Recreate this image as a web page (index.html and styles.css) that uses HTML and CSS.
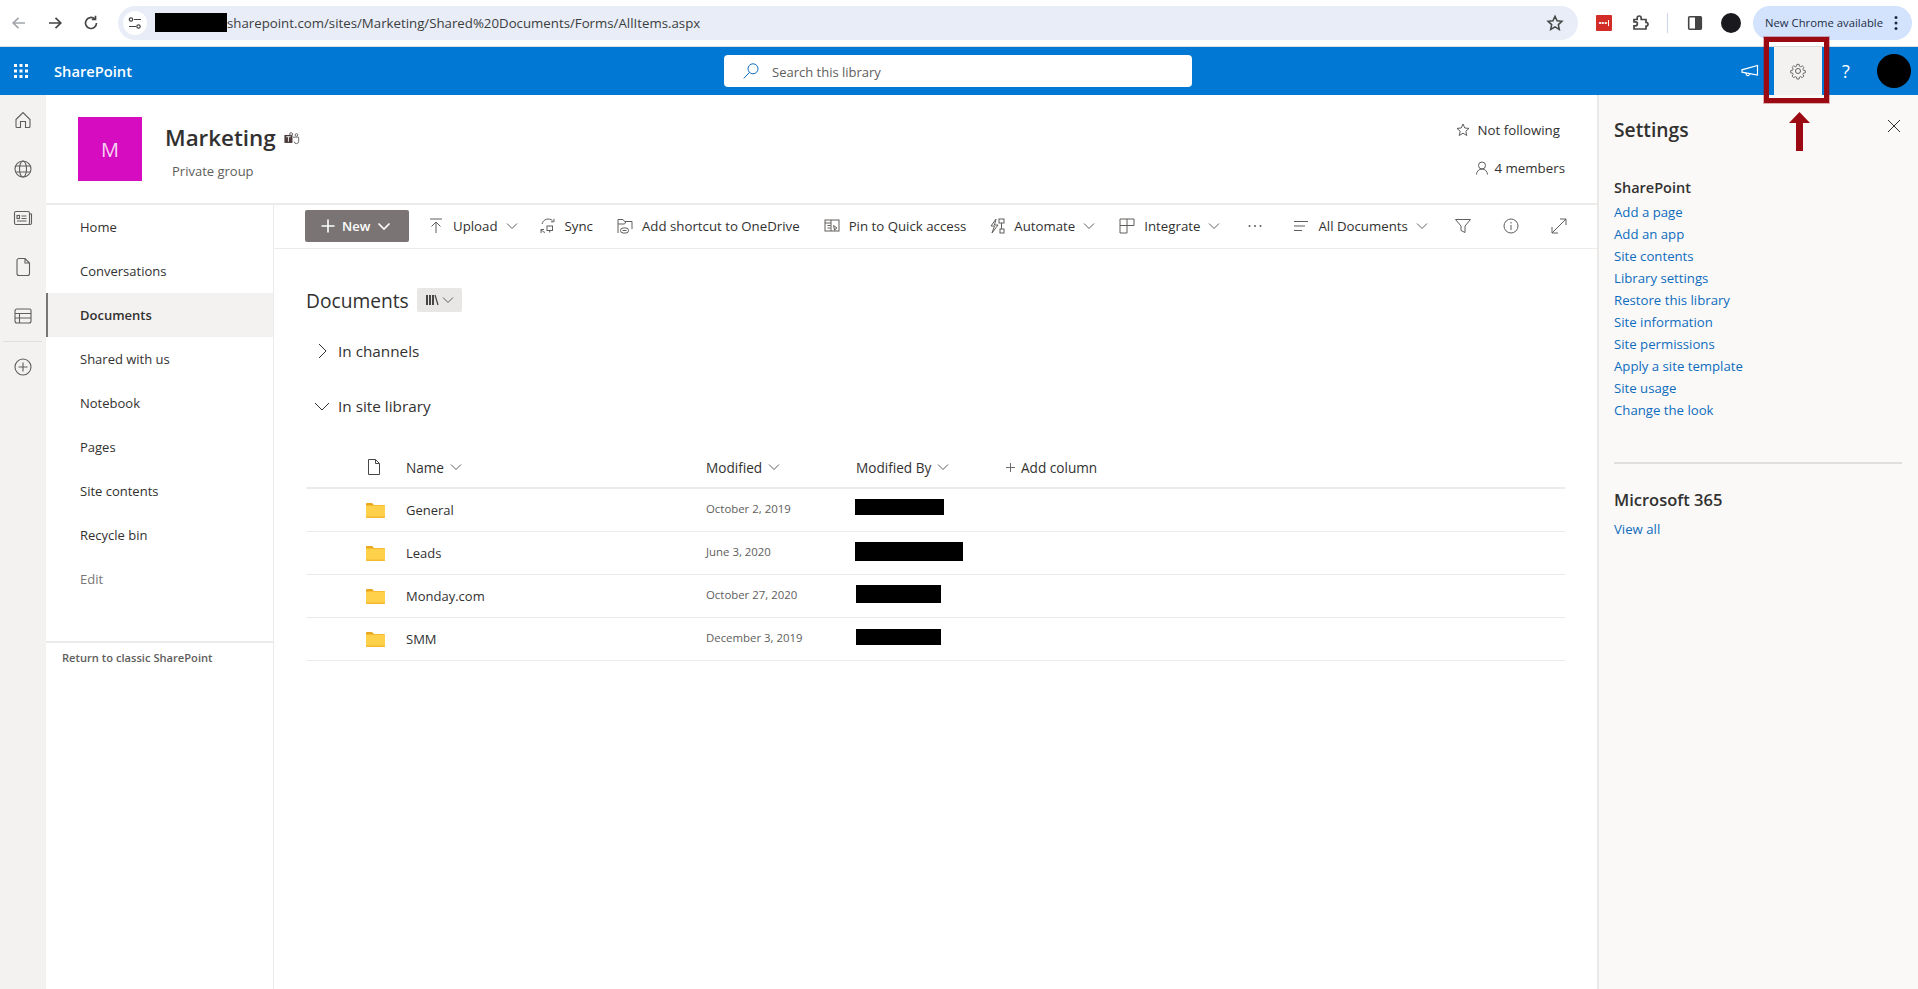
FILE: index.html
```html
<!DOCTYPE html>
<html lang="en">
<head>
<meta charset="utf-8">
<title>Documents - SharePoint</title>
<link rel="stylesheet" href="styles.css">
</head>
<body>
<header class="chrome">
  <div class="chrome-nav">
    <span class="c-cell"><svg class="i20 st-off" viewBox="0 0 20 20"><path d="M16 10H4.5M9.5 4.8 4.2 10l5.3 5.2"/></svg></span>
    <span class="c-cell"><svg class="i20 st-dark" viewBox="0 0 20 20"><path d="M4 10h11.5M10.5 4.8l5.3 5.2-5.3 5.2"/></svg></span>
    <span class="c-cell"><svg class="i20 st-dark" viewBox="0 0 20 20"><path d="M15.5 10a5.5 5.5 0 1 1-1.7-4M14.500 2.800v3.700h-3.700"/></svg></span>
  </div>
  <div class="omnibox">
    <span class="site-chip"><svg class="i14 st-thin-dark" viewBox="0 0 14 14"><path d="M6 3.500h7M1 10.500h7"/><circle cx="3" cy="3.500" r="1.700"/><circle cx="10.500" cy="10.500" r="1.700"/></svg></span>
    <span class="redact redact-url"></span>
    <span class="url">sharepoint.com/sites/Marketing/Shared%20Documents/Forms/AllItems.aspx</span>
    <svg class="i18 star-btn st-dark" viewBox="0 0 20 20"><path d="m10 2.500 2.300 5 5.400.6-4 3.700 1.100 5.400L10 14.400l-4.800 2.800 1.100-5.400-4-3.700 5.400-.6z"/></svg>
  </div>
  <div class="chrome-tools">
    <span class="c-cell"><span class="lastpass"><span class="lp-dots">•••</span><span class="lp-bar"></span></span></span>
    <span class="c-cell"><svg class="i20 st-dark" viewBox="0 0 20 20"><path d="M4 6.500h3.200V5a2 2 0 0 1 4 0v1.500H16v3h1a2 2 0 0 1 0 3.500h-1v3H4v-3.200h1.400a2 2 0 0 0 0-4H4z"/></svg></span>
    <span class="c-sep"></span>
    <span class="c-cell"><svg class="i20" viewBox="0 0 20 20"><rect x="3.700" y="3.700" width="12.600" height="12.600" rx="1" fill="none" stroke="#444" stroke-width="1.600"/><rect x="10" y="3.700" width="6.300" height="12.600" fill="#444"/></svg></span>
    <span class="c-cell"><span class="chrome-avatar"></span></span>
    <span class="update-pill"><span class="update-text">New Chrome available</span><svg class="pill-dots" viewBox="0 0 4 16"><circle cx="2" cy="2.500" r="1.500"/><circle cx="2" cy="8" r="1.500"/><circle cx="2" cy="13.500" r="1.500"/></svg></span>
  </div>
</header>

<div class="suite">
  <div class="suite-left">
    <svg class="waffle" viewBox="0 0 16 16"><g fill="#fff"><rect x="1" y="1" width="3" height="3"/><rect x="6.500" y="1" width="3" height="3"/><rect x="12" y="1" width="3" height="3"/><rect x="1" y="6.500" width="3" height="3"/><rect x="6.500" y="6.500" width="3" height="3"/><rect x="12" y="6.500" width="3" height="3"/><rect x="1" y="12" width="3" height="3"/><rect x="6.500" y="12" width="3" height="3"/><rect x="12" y="12" width="3" height="3"/></g></svg>
    <span class="suite-title">SharePoint</span>
  </div>
  <div class="search">
    <svg class="i18 st-blue" viewBox="0 0 18 18"><circle cx="11" cy="6.800" r="5"/><path d="m7.400 10.400-5.600 6"/></svg>
    <span class="search-text">Search this library</span>
  </div>
  <div class="suite-right">
    <span class="s-cell"><svg class="i20 st-white" viewBox="0 0 20 20"><path d="M17.500 4.500v9.500L2 11.200V8.800zM6 12l.3 1.600a1.600 1.600 0 0 0 3.100-.7l-.2-.6"/></svg></span>
    <span class="s-cell s-active"><svg class="i18 st-gear" viewBox="0 0 20 20"><circle cx="10" cy="10" r="2.800"/><path d="M8.600 1.800h2.800l.4 2.300 1.500.7 2-1.200 2 2-1.300 2 .7 1.500 2.300.4v2.800l-2.300.4-.7 1.500 1.300 2-2 2-2-1.300-1.500.7-.4 2.300H8.600l-.4-2.300-1.500-.7-2 1.300-2-2 1.300-2-.7-1.500-2.300-.4V9.500l2.300-.4.7-1.500-1.300-2 2-2 2 1.200 1.500-.7z" transform="translate(1 1) scale(.9)"/></svg></span>
    <span class="s-cell s-help">?</span>
    <span class="s-cell"><span class="suite-avatar"></span></span>
  </div>
</div>

<main class="workspace">
  <nav class="rail">
    <svg class="i20 st-rail" viewBox="0 0 20 20"><path d="M3 9.500 10 2.500l7 7v7a1 1 0 0 1-1 1h-3.500v-6h-5v6H4a1 1 0 0 1-1-1z"/></svg>
    <svg class="i20 st-rail" viewBox="0 0 20 20"><circle cx="10" cy="10" r="8"/><ellipse cx="10" cy="10" rx="3.500" ry="8"/><path d="M2.600 7h14.800M2.600 13h14.800"/></svg>
    <svg class="i20 st-rail" viewBox="0 0 20 20"><rect x="1.500" y="3.500" width="15" height="13" rx="1.500"/><path d="M16.500 6h2v9a1.500 1.500 0 0 1-1.500 1.500h-1M8.500 8h5M8.500 10.500h5M4 13h9.500"/><rect x="4" y="7.500" width="2.500" height="3"/></svg>
    <svg class="i20 st-rail" viewBox="0 0 20 20"><path d="M4 3.500a2 2 0 0 1 2-2h6l4.500 4.500v10.500a2 2 0 0 1-2 2H6a2 2 0 0 1-2-2zM12 1.500V6h4.500"/></svg>
    <svg class="i20 st-rail" viewBox="0 0 20 20"><path d="M4 3h12.500a1.500 1.500 0 0 1 1.500 1.500V15a2 2 0 0 1-2 2H4a2 2 0 0 1-2-2V5a2 2 0 0 1 2-2zM2 7.500h16M2 12h16M6.500 7.500V17"/></svg>
    <span class="rail-rule"></span>
    <svg class="i20 st-rail" viewBox="0 0 20 20"><circle cx="10" cy="10" r="8"/><path d="M10 5.500v9M5.500 10h9"/></svg>
  </nav>

  <div class="center">
    <section class="site-head">
      <div class="site-tile">M</div>
      <div class="site-meta">
        <div class="site-name-row">
          <h1 class="site-name">Marketing</h1>
          <svg class="teams" viewBox="0 0 18 14"><rect x="0.500" y="3" width="9" height="9" fill="#4b3a3a"/><path d="M2.500 5h5M5 5v5.500" stroke="#fff" fill="none"/><circle cx="8" cy="2" r="1.600" fill="none" stroke="#605e5c"/><circle cx="14" cy="3" r="1.500" fill="none" stroke="#605e5c"/><path d="M10 5.500h6.500v4.500a2.500 2.500 0 0 1-5 .5" fill="none" stroke="#605e5c"/></svg>
        </div>
        <div class="site-privacy">Private group</div>
      </div>
      <div class="site-actions">
        <div class="follow"><svg class="i14 st-mid" viewBox="0 0 14 14"><path d="m7 1 1.800 4 4.200.4-3.200 2.800 1 4.300L7 10.200 3.200 12.500l1-4.300L1 5.400 5.200 5z"/></svg><span>Not following</span></div>
        <div class="members"><svg class="i14 st-mid" viewBox="0 0 14 14"><circle cx="7" cy="4.500" r="3.500"/><path d="M1.500 13.500a5.500 5.500 0 0 1 11 0"/></svg><span>4 members</span></div>
      </div>
    </section>

    <div class="columns">
      <aside class="sidenav">
        <div class="navlist">
          <a class="nav-item">Home</a>
          <a class="nav-item">Conversations</a>
          <a class="nav-item nav-on">Documents</a>
          <a class="nav-item">Shared with us</a>
          <a class="nav-item">Notebook</a>
          <a class="nav-item">Pages</a>
          <a class="nav-item">Site contents</a>
          <a class="nav-item">Recycle bin</a>
          <a class="nav-item nav-edit">Edit</a>
        </div>
        <div class="classic">Return to classic SharePoint</div>
      </aside>

      <section class="library">
        <div class="toolbar">
          <button class="new-btn"><svg class="i14 st-white-b" viewBox="0 0 14 14"><path d="M7 .5v13M.5 7h13"/></svg><span>New</span><svg class="i14 st-white-b" viewBox="0 0 14 14"><path d="m1.500 4.500 5.500 5.500 5.500-5.500"/></svg></button>
          <span class="tool"><svg class="i16 st-tool" viewBox="0 0 16 16"><path d="M2 1h12M8 15V4M3.500 8.500 8 4l4.500 4.500"/></svg><span>Upload</span><svg class="chev st-tool" viewBox="0 0 12 12"><path d="m1 3.500 5 5 5-5"/></svg></span>
          <span class="tool tool-sync"><svg class="i16 st-tool" viewBox="0 0 16 16"><path d="M2 6a6.500 6.500 0 0 1 10.500-3.500M14 .8v3h-3M1 11.500a6.500 6.500 0 0 0 4 3M1 15v-3.500h3"/><rect x="7" y="8" width="5.500" height="4.500"/><path d="M9.700 12.500v2"/></svg><span>Sync</span></span>
          <span class="tool"><svg class="i16 st-tool" viewBox="0 0 16 16"><path d="M1 15V1.500h5l1.500 2H15V11M1 6h6.500l1.500-2.500"/><rect x="3.500" y="10" width="8" height="5" rx="2.500"/><path d="M5.500 12.500h4"/></svg><span>Add shortcut to OneDrive</span></span>
          <span class="tool"><svg class="i16 st-tool" viewBox="0 0 16 16"><rect x="1" y="2" width="14" height="11"/><path d="M1 5h6M3.500 7.500h3M3.500 10h3M7 2v11"/><path d="m9.500 7.500 3.500 2.500-1.500.8-.8 1.700z"/></svg><span>Pin to Quick access</span></span>
          <span class="tool tool-auto"><svg class="i16 st-tool" viewBox="0 0 16 16"><path d="M7 1 2 8h3.500L3 15l6-8H5.500z"/><rect x="10" y="1" width="5" height="4"/><rect x="11" y="11" width="4" height="4"/><path d="M12.500 5v6"/></svg><span>Automate</span><svg class="chev st-tool" viewBox="0 0 12 12"><path d="m1 3.500 5 5 5-5"/></svg></span>
          <span class="tool"><svg class="i16 st-tool" viewBox="0 0 16 16"><path d="M1 1h14v6.500H8V15H1zM1 7.500h7M8 1v6.500"/></svg><span>Integrate</span><svg class="chev st-tool" viewBox="0 0 12 12"><path d="m1 3.500 5 5 5-5"/></svg></span>
          <span class="tool tool-more"><svg class="i16" viewBox="0 0 16 16"><g fill="#605e5c"><circle cx="2.500" cy="8" r="1"/><circle cx="8" cy="8" r="1"/><circle cx="13.500" cy="8" r="1"/></g></svg></span>
          <span class="tool tool-view"><svg class="i16 st-tool" viewBox="0 0 16 16"><path d="M1 3.500h14M1 8h11M1 12.500h8"/></svg><span>All Documents</span><svg class="chev st-tool" viewBox="0 0 12 12"><path d="m1 3.500 5 5 5-5"/></svg></span>
          <span class="tool tool-filter"><svg class="i16 st-tool" viewBox="0 0 16 16"><path d="M.5 1.500h15L10 8v6.500l-4-2V8z"/></svg></span>
          <span class="tool tool-end"><svg class="i16 st-tool" viewBox="0 0 16 16"><circle cx="8" cy="8" r="7"/><path d="M8 7v5M8 4v1.500"/></svg></span>
          <span class="tool tool-end"><svg class="i16 st-tool" viewBox="0 0 16 16"><path d="M1 15 15 1M9 1h6v6M1 9v6h6"/></svg></span>
        </div>

        <div class="lib-body">
          <div class="doc-title-row">
            <h2 class="doc-title">Documents</h2>
            <span class="lib-switch"><svg class="i14 st-books" viewBox="0 0 14 14"><path d="M2 2v10M5 2v10M8 2v10"/><path class="book-slant" d="m10 2 3 10"/></svg><svg class="chev st-tool" viewBox="0 0 12 12"><path d="m1 3.500 5 5 5-5"/></svg></span>
          </div>
          <div class="group group-channels"><svg class="i14 st-text" viewBox="0 0 14 14"><path d="m4 0 7 7-7 7"/></svg><span>In channels</span></div>
          <div class="group group-library"><svg class="i14 st-text" viewBox="0 0 14 14"><path d="m0 4 7 7 7-7"/></svg><span>In site library</span></div>

          <div class="table">
            <div class="t-row t-head">
              <span class="t-icon"><svg class="i16 st-tool-dark" viewBox="0 0 16 16"><path d="M2.500.5h7l4 4v11h-11zM9.500.5v4h4"/></svg></span>
              <span class="th">Name<svg class="chev st-tool" viewBox="0 0 12 12"><path d="m1 3.500 5 5 5-5"/></svg></span>
              <span class="th">Modified<svg class="chev st-tool" viewBox="0 0 12 12"><path d="m1 3.500 5 5 5-5"/></svg></span>
              <span class="th">Modified By<svg class="chev st-tool" viewBox="0 0 12 12"><path d="m1 3.500 5 5 5-5"/></svg></span>
              <span class="th th-add"><svg class="plus st-tool" viewBox="0 0 10 10"><path d="M5 0v10M0 5h10"/></svg>Add column</span>
            </div>
            <div class="t-row">
              <span class="t-icon"><svg class="folder" viewBox="0 0 19 15"><path d="M0 1A1 1 0 0 1 1 0h5l2 2h10a1 1 0 0 1 1 1v3H0z" fill="#e8a71c"/><path d="M0 2.500h19V14a1 1 0 0 1-1 1H1a1 1 0 0 1-1-1z" fill="#ffd04a"/><path d="M0 14v-.5h19v.5a1 1 0 0 1-1 1H1a1 1 0 0 1-1-1z" fill="#f4b92e"/></svg></span>
              <span class="file-name">General</span>
              <span class="file-date">October 2, 2019</span>
              <span class="redact by-1"></span>
            </div>
            <div class="t-row">
              <span class="t-icon"><svg class="folder" viewBox="0 0 19 15"><path d="M0 1A1 1 0 0 1 1 0h5l2 2h10a1 1 0 0 1 1 1v3H0z" fill="#e8a71c"/><path d="M0 2.500h19V14a1 1 0 0 1-1 1H1a1 1 0 0 1-1-1z" fill="#ffd04a"/><path d="M0 14v-.5h19v.5a1 1 0 0 1-1 1H1a1 1 0 0 1-1-1z" fill="#f4b92e"/></svg></span>
              <span class="file-name">Leads</span>
              <span class="file-date">June 3, 2020</span>
              <span class="redact by-2"></span>
            </div>
            <div class="t-row">
              <span class="t-icon"><svg class="folder" viewBox="0 0 19 15"><path d="M0 1A1 1 0 0 1 1 0h5l2 2h10a1 1 0 0 1 1 1v3H0z" fill="#e8a71c"/><path d="M0 2.500h19V14a1 1 0 0 1-1 1H1a1 1 0 0 1-1-1z" fill="#ffd04a"/><path d="M0 14v-.5h19v.5a1 1 0 0 1-1 1H1a1 1 0 0 1-1-1z" fill="#f4b92e"/></svg></span>
              <span class="file-name">Monday.com</span>
              <span class="file-date">October 27, 2020</span>
              <span class="redact by-3"></span>
            </div>
            <div class="t-row">
              <span class="t-icon"><svg class="folder" viewBox="0 0 19 15"><path d="M0 1A1 1 0 0 1 1 0h5l2 2h10a1 1 0 0 1 1 1v3H0z" fill="#e8a71c"/><path d="M0 2.500h19V14a1 1 0 0 1-1 1H1a1 1 0 0 1-1-1z" fill="#ffd04a"/><path d="M0 14v-.5h19v.5a1 1 0 0 1-1 1H1a1 1 0 0 1-1-1z" fill="#f4b92e"/></svg></span>
              <span class="file-name">SMM</span>
              <span class="file-date">December 3, 2019</span>
              <span class="redact by-4"></span>
            </div>
          </div>
        </div>
      </section>
    </div>
  </div>

  <aside class="settings">
    <div class="settings-head">
      <h2 class="settings-title">Settings</h2>
      <svg class="close st-text" viewBox="0 0 12 12"><path d="m0 0 12 12M12 0 0 12"/></svg>
    </div>
    <h3 class="settings-sub">SharePoint</h3>
    <div class="settings-links">
      <a class="s-link">Add a page</a>
      <a class="s-link">Add an app</a>
      <a class="s-link">Site contents</a>
      <a class="s-link">Library settings</a>
      <a class="s-link">Restore this library</a>
      <a class="s-link">Site information</a>
      <a class="s-link">Site permissions</a>
      <a class="s-link">Apply a site template</a>
      <a class="s-link">Site usage</a>
      <a class="s-link">Change the look</a>
    </div>
    <hr class="settings-rule">
    <h3 class="settings-m365">Microsoft 365</h3>
    <a class="s-link">View all</a>
  </aside>
</main>

<div class="callout-box"></div>
<svg class="callout-arrow" viewBox="0 0 21 39"><path d="M10.500 0 21 11h-7v28H7V11H0z" fill="#9b0a12"/></svg>
</body>
</html>
```

FILE: styles.css
```css
* { box-sizing: border-box; }
html, body { margin: 0; padding: 0; }
body {
  width: 1918px;
  height: 989px;
  overflow: hidden;
  position: relative;
  background: #fff;
  color: #323130;
  font-family: "Open Sans", "Noto Sans", sans-serif;
  font-size: 13px;
  display: flex;
  flex-direction: column;
}
h1, h2, h3 { margin: 0; font-weight: 600; }
svg { display: block; flex: none; fill: none; }
button { font-family: inherit; }

/* icon sizes and strokes */
.i14 { width: 14px; height: 14px; }
.i16 { width: 16px; height: 16px; }
.i18 { width: 18px; height: 18px; }
.i20 { width: 20px; height: 20px; }
.chev { width: 12px; height: 12px; }
.st-off { stroke: #a3a6ab; stroke-width: 1.7; }
.st-dark { stroke: #444746; stroke-width: 1.7; }
.st-thin-dark { stroke: #444746; stroke-width: 1.2; }
.st-blue { stroke: #0f6cbd; stroke-width: 1; }
.st-white { stroke: #fff; stroke-width: 1.2; }
.st-white-b { stroke: #fff; stroke-width: 1.6; }
.st-gear { stroke: #50504f; stroke-width: 1; }
.st-rail { stroke: #605e5c; stroke-width: 1.1; }
.st-mid { stroke: #605e5c; stroke-width: 1; }
.st-tool { stroke: #605e5c; stroke-width: 1; }
.st-tool-dark { stroke: #484644; stroke-width: 1; }
.st-text { stroke: #323130; stroke-width: 1; }
.st-books { stroke: #484644; stroke-width: 2; }
.book-slant { stroke-width: 1.2; }

.redact { display: block; background: #000; flex: none; }

/* browser chrome */
.chrome {
  height: 47px;
  flex: none;
  display: flex;
  align-items: center;
  background: #fff;
  border-bottom: 1px solid #dadce0;
  padding: 0 6px 1px 1px;
}
.chrome-nav, .chrome-tools { display: flex; align-items: center; flex: none; }
.c-cell { width: 36px; height: 34px; display: flex; align-items: center; justify-content: center; flex: none; }
.omnibox {
  flex: 1;
  margin-left: 9px;
  height: 34px;
  border-radius: 17px;
  background: #e9edf7;
  display: flex;
  align-items: center;
  padding: 0 14px 0 5px;
}
.site-chip { width: 24px; height: 24px; border-radius: 50%; background: #fff; display: flex; align-items: center; justify-content: center; }
.redact-url { width: 72px; height: 19px; margin-left: 8px; }
.url { font-size: 13.25px; color: #3b3d40; white-space: nowrap; }
.star-btn { margin-left: auto; }
.chrome-tools { margin-left: 8px; }
.lastpass { width: 16px; height: 16px; background: #d32d27; display: flex; align-items: center; justify-content: center; gap: 1px; border-radius: 1px; }
.lp-dots { color: #fff; font-size: 8px; line-height: 1; font-family: "Liberation Sans", sans-serif; }
.lp-bar { width: 1px; height: 6px; background: #fff; }
.c-sep { width: 1px; height: 20px; background: #c9d5ea; margin: 0 9px; flex: none; }
.chrome-avatar { width: 20px; height: 20px; border-radius: 50%; background: #1a1a1e; }
.update-pill {
  margin-left: 4px;
  width: 159px;
  height: 34px;
  border-radius: 17px;
  background: #d3e3fd;
  display: flex;
  align-items: center;
  padding-left: 12px;
}
.update-text { font-size: 11.3px; color: #1c2d47; white-space: nowrap; }
.pill-dots { width: 4px; height: 16px; fill: #1c2d47; margin-left: auto; margin-right: 14px; }

/* suite bar */
.suite { height: 48px; flex: none; background: #0078d4; display: flex; align-items: center; }
.suite-left { width: 724px; flex: none; display: flex; align-items: center; padding-left: 13px; }
.waffle { width: 16px; height: 16px; }
.suite-title { margin-left: 25px; color: #fff; font-size: 14.7px; font-weight: 600; }
.search {
  width: 468px;
  height: 32px;
  flex: none;
  background: #fff;
  border-radius: 4px;
  display: flex;
  align-items: center;
  padding-left: 18px;
}
.search-text { margin-left: 12px; color: #605e5c; font-size: 13px; padding-top: 1px; }
.suite-right { margin-left: auto; display: flex; }
.s-cell { width: 48px; height: 48px; display: flex; align-items: center; justify-content: center; color: #fff; }
.s-active { background: #f3f2f1; }
.s-help { font-size: 18px; }
.suite-avatar { width: 34px; height: 34px; border-radius: 50%; background: #000; }

/* page frame */
.workspace { flex: 1; min-height: 0; display: flex; }
.rail {
  width: 46px;
  flex: none;
  background: #f3f2f1;
  display: flex;
  flex-direction: column;
  align-items: center;
  padding: 15px 1px 0 0;
  gap: 29px;
}
.rail-rule { width: 39px; height: 1px; background: #e1dfdd; margin: -14px 0; }
.center { flex: 1; min-width: 0; display: flex; flex-direction: column; }

/* site header */
.site-head { height: 108px; flex: none; display: flex; padding: 22px 33px 0 32px; }
.site-tile {
  width: 64px;
  height: 64px;
  background: #d60cc1;
  color: #f7d4f2;
  font-size: 20px;
  display: flex;
  align-items: center;
  justify-content: center;
  flex: none;
}
.site-meta { margin-left: 23px; }
.site-name-row { display: flex; align-items: center; height: 42px; padding-top: 1px; }
.site-name { font-size: 22.4px; font-weight: 600; color: #323130; line-height: 1; }
.teams { width: 16px; height: 13px; margin-left: 8px; }
.site-privacy { margin: 0 0 0 7px; color: #605e5c; font-size: 13px; line-height: 24px; }
.site-actions { margin-left: auto; display: flex; flex-direction: column; align-items: flex-end; padding-top: 1px; font-size: 13.3px; }
.follow, .members { display: flex; align-items: center; gap: 8px; height: 24px; }
.follow { margin-right: 4px; }
.members { margin: 14px -1px 0 0; gap: 5px; }

/* left navigation */
.columns { flex: 1; min-height: 0; display: flex; border-top: 2px solid #edebe9; }
.sidenav { width: 228px; flex: none; border-right: 1px solid #edebe9; }
.navlist { height: 438px; border-bottom: 2px solid #edebe9; }
.nav-item { display: flex; align-items: center; height: 44px; padding-left: 34px; }
.nav-on { background: #f3f2f1; border-left: 2px solid #797775; padding-left: 32px; font-weight: 600; width: 227px; }
.nav-edit { color: #797775; }
.classic { margin: 5px 0 0 16px; font-size: 11.15px; font-weight: 600; color: #605e5c; line-height: 20px; }

/* library */
.library { flex: 1; min-width: 0; }
.toolbar {
  height: 46px;
  margin-top: -2px;
  border-bottom: 1px solid #edebe9;
  display: flex;
  align-items: center;
  padding: 1px 0 0 31px;
  gap: 24px;
  font-size: 13.25px;
  white-space: nowrap;
}
.new-btn {
  width: 104px;
  height: 32px;
  background: #7a7574;
  border: 0;
  border-radius: 2px;
  color: #fff;
  font-size: 13px;
  font-weight: 600;
  display: flex;
  align-items: center;
  padding: 0 0 0 16px;
  gap: 7px;
  margin-right: -5px;
}
.tool { display: flex; align-items: center; gap: 9px; color: #323130; }
.tool .chev { margin-left: -1px; }
.tool-sync { margin-left: -2px; }
.tool-auto { margin-left: -1px; }
.tool-more { margin-left: 3px; }
.tool-view { margin-left: 6px; }
.tool-filter { margin-left: 3px; }
.tool-end { margin-left: 8px; }

.lib-body { padding: 0 32px; }
.doc-title-row { display: flex; align-items: center; height: 24px; margin-top: 39px; }
.doc-title { font-size: 19.2px; color: #323130; font-weight: 500; }
.lib-switch {
  width: 45px;
  height: 24px;
  margin-left: 8px;
  background: #e9e7e6;
  border-radius: 2px;
  display: flex;
  align-items: center;
  justify-content: center;
  gap: 3px;
}
.group { display: flex; align-items: center; font-size: 15.3px; font-weight: 500; color: #323130; height: 24px; padding-left: 9px; gap: 9px; }
.group-channels { margin-top: 27px; }
.group-library { margin-top: 31px; }

.table { margin-top: 35px; }
.t-row {
  display: grid;
  grid-template-columns: 100px 300px 150px 154px 1fr;
  align-items: center;
  height: 43px;
  border-bottom: 1px solid #edebe9;
}
.t-head { height: 36px; border-bottom-width: 2px; padding-bottom: 6px; }
.t-icon { padding-left: 60px; }
.th { display: flex; align-items: center; gap: 6px; color: #323130; font-weight: 500; font-size: 13.6px; }
.th-add { gap: 6px; margin-left: -4px; }
.plus { width: 9px; height: 9px; }
.folder { width: 19px; height: 15px; }
.file-name { color: #323130; }
.file-date { font-size: 11.4px; color: #605e5c; margin-bottom: 3px; }
.by-1 { width: 89px; height: 16px; margin: 0 0 7px -1px; }
.by-2 { width: 108px; height: 19px; margin: 0 0 3px -1px; }
.by-3 { width: 85px; height: 18px; margin: 0 0 4px 0; }
.by-4 { width: 85px; height: 16px; margin: 0 0 4px 0; }

/* settings panel */
.settings {
  width: 321px;
  flex: none;
  background: #faf9f8;
  border-left: 2px solid #e9e8e7;
  padding: 0 16px 0 15px;
  display: flex;
  flex-direction: column;
  align-items: flex-start;
}
.settings-head { width: 100%; display: flex; justify-content: space-between; padding-top: 23px; height: 72px; }
.settings-title { font-size: 19.3px; line-height: 24px; color: #323130; }
.close { width: 12px; height: 12px; margin: 2px 2px 0 0; }
.settings-sub { font-size: 14.5px; line-height: 20px; color: #323130; margin-top: 11px; }
.settings-links { display: flex; flex-direction: column; margin-top: 3px; }
.s-link { display: block; line-height: 22px; color: #0f6cbd; font-size: 13.2px; }
.settings-rule { width: 100%; height: 2px; border: 0; margin: 41px 0 0; background: #e1dfdd; }
.settings-m365 { font-size: 16.5px; line-height: 24px; margin-top: 24px; margin-bottom: 6px; color: #323130; }

/* annotation drawn over the screenshot */
.callout-box {
  position: absolute;
  left: 1764px;
  top: 37px;
  width: 65px;
  height: 66px;
  border: 5px solid #9b0a12;
  outline: 1px solid rgba(155, 10, 18, .3);
}
.callout-arrow { position: absolute; left: 1789px; top: 112px; width: 21px; height: 39px; }
```
